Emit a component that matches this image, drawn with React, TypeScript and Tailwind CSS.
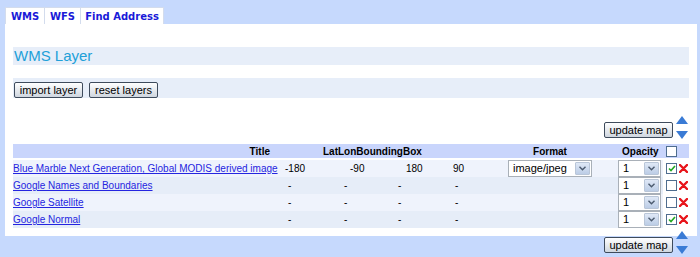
const rows = [
  { title: "Blue Marble Next Generation, Global MODIS derived image", bbox: ["-180", "-90", "180", "90"], format: true, checked: true },
  { title: "Google Names and Boundaries", bbox: ["-", "-", "-", "-"], format: false, checked: false },
  { title: "Google Satellite", bbox: ["-", "-", "-", "-"], format: false, checked: false },
  { title: "Google Normal", bbox: ["-", "-", "-", "-"], format: false, checked: true },
];

const bboxPad = [
  ["pl-[4px]", "pl-[12px]", "pl-[11px]", "pl-[1px]"],
  ["pl-[7px]", "pl-[6px]", "pl-[3px]", "pl-[3px]"],
];

const Chevron = () => (
  <svg width="7" height="5" viewBox="0 0 7 5">
    <path d="M0.5 0.8 L3.5 3.8 L6.5 0.8" fill="none" stroke="#4b5a6e" strokeWidth="1.4" />
  </svg>
);

const Select = ({ value, width }: { value: string; width: string }) => (
  <div className={`${width} h-[17px] flex items-stretch bg-white border border-[#a9b0b8] text-[11px] text-black`}>
    <span className="flex-1 pl-[4px] leading-[15px] whitespace-nowrap">{value}</span>
    <span className="w-[15px] m-[1px] flex items-center justify-center bg-gradient-to-b from-[#dfe8f6] to-[#bccde6] border border-[#b9c6d8] rounded-[1px]">
      <Chevron />
    </span>
  </div>
);

const Checkbox = ({ checked }: { checked: boolean }) => (
  <span className="w-[11px] h-[11px] border border-[#4f6d8f] bg-white flex items-center justify-center">
    {checked && (
      <svg width="8" height="7" viewBox="0 0 8 7">
        <path d="M1 3.5 L3 5.5 L7 1" fill="none" stroke="#21a821" strokeWidth="1.6" />
      </svg>
    )}
  </span>
);

const RedX = () => (
  <svg width="9" height="9" viewBox="0 0 9 9">
    <path d="M1 1 L8 8 M8 1 L1 8" stroke="#e8141a" strokeWidth="2.4" strokeLinecap="round" />
  </svg>
);

const Arrows = () => (
  <div className="flex flex-col gap-[7px] ml-[3px] mr-[1px]">
    <svg width="12" height="8" viewBox="0 0 12 8">
      <path d="M6 0 L12 8 L0 8 Z" fill="#3a7bd5" />
    </svg>
    <svg width="12" height="8" viewBox="0 0 12 8">
      <path d="M0 0 L12 0 L6 8 Z" fill="#3a7bd5" />
    </svg>
  </div>
);

const Btn = ({ label, className = "" }: { label: string; className?: string }) => (
  <button className={`h-[16px] px-0 text-[11px] leading-[13px] text-black whitespace-nowrap text-center border border-[#3e4b5c] rounded-[2px] bg-gradient-to-b from-white to-[#cfd6df] ${className}`}>
    {label}
  </button>
);

const UpdateRow = ({ className = "" }: { className?: string }) => (
  <div className={`flex justify-end items-start ${className}`}>
    <Btn label="update map" className="mt-[6px] w-[69px]" />
    <Arrows />
  </div>
);

export default function App() {
  return (
    <div className="w-[700px] h-[257px] bg-[#c6d9fd] pt-[7px] pl-[5px] pr-[3px] font-['Liberation_Sans',Arial,sans-serif] overflow-hidden">
      <div className="flex h-[17px] font-['DejaVu_Sans',Verdana,sans-serif] font-bold text-[10px] text-[#1a1ad8]">
        <div className="w-[40px] bg-white border border-b-0 border-[#d3dced] flex items-center justify-center">WMS</div>
        <div className="w-[36px] bg-white border border-b-0 border-l-0 border-[#d3dced] flex items-center justify-center">WFS</div>
        <div className="w-[83px] bg-white border border-b-0 border-l-0 border-[#d3dced] flex items-center justify-center">Find Address</div>
      </div>
      <div className="bg-white h-[212px] px-[8px] pt-[23px]">
        <div className="h-[18px] bg-[#e7eef9] text-[15px] leading-[18px] text-[#22a0d8] pl-[1px]">WMS Layer</div>
        <div className="mt-[13px] h-[20px] bg-[#e7eef9] flex items-start gap-[6px] pt-[4px] pl-[1px]">
          <Btn label="import layer" className="w-[69px]" />
          <Btn label="reset layers" className="w-[69px]" />
        </div>
        <UpdateRow className="mt-[18px]" />
        <div className="mt-[5px] text-[10px] text-black">
          <div className="grid grid-cols-[268px_57px_57px_57px_48px_100px_63px_14px_12px] h-[14px] bg-[#c9d5fc] font-bold items-center">
            <div className="text-right pr-[11px]">Title</div>
            <div className="col-span-4 pl-[42px]">LatLonBoundingBox</div>
            <div className="text-center">Format</div>
            <div className="pl-[22px]">Opacity</div>
            <div className="col-span-2 flex pl-[3px]"><Checkbox checked={false} /></div>
          </div>
          <div className="mt-[2px]">
            {rows.map((r, i) => (
              <div
                key={r.title}
                className="grid grid-cols-[268px_57px_57px_57px_48px_100px_63px_14px_12px] h-[17px] items-center"
              >
                <div className={`col-span-7 grid grid-cols-[268px_57px_57px_57px_48px_100px_63px] h-full items-center ${i % 2 === 0 ? "bg-[#eff3fc]" : "bg-[#e6edf8]"}`}>
                  <a href="#" className="text-[#2525e0] underline underline-offset-1 whitespace-nowrap">{r.title}</a>
                  {r.bbox.map((b, j) => (
                    <div key={j} className={bboxPad[r.format ? 0 : 1][j]}>{b}</div>
                  ))}
                  <div className="flex justify-center">
                    {r.format && <Select value="image/jpeg" width="w-[84px]" />}
                  </div>
                  <div className="flex justify-end pr-[2px]">
                    <Select value="1" width="w-[43px]" />
                  </div>
                </div>
                <div className="flex pl-[3px]"><Checkbox checked={r.checked} /></div>
                <div className="flex pl-[2px]"><RedX /></div>
              </div>
            ))}
          </div>
        </div>
      </div>
      <UpdateRow className="-mt-[5px] pr-[8px]" />
    </div>
  );
}
